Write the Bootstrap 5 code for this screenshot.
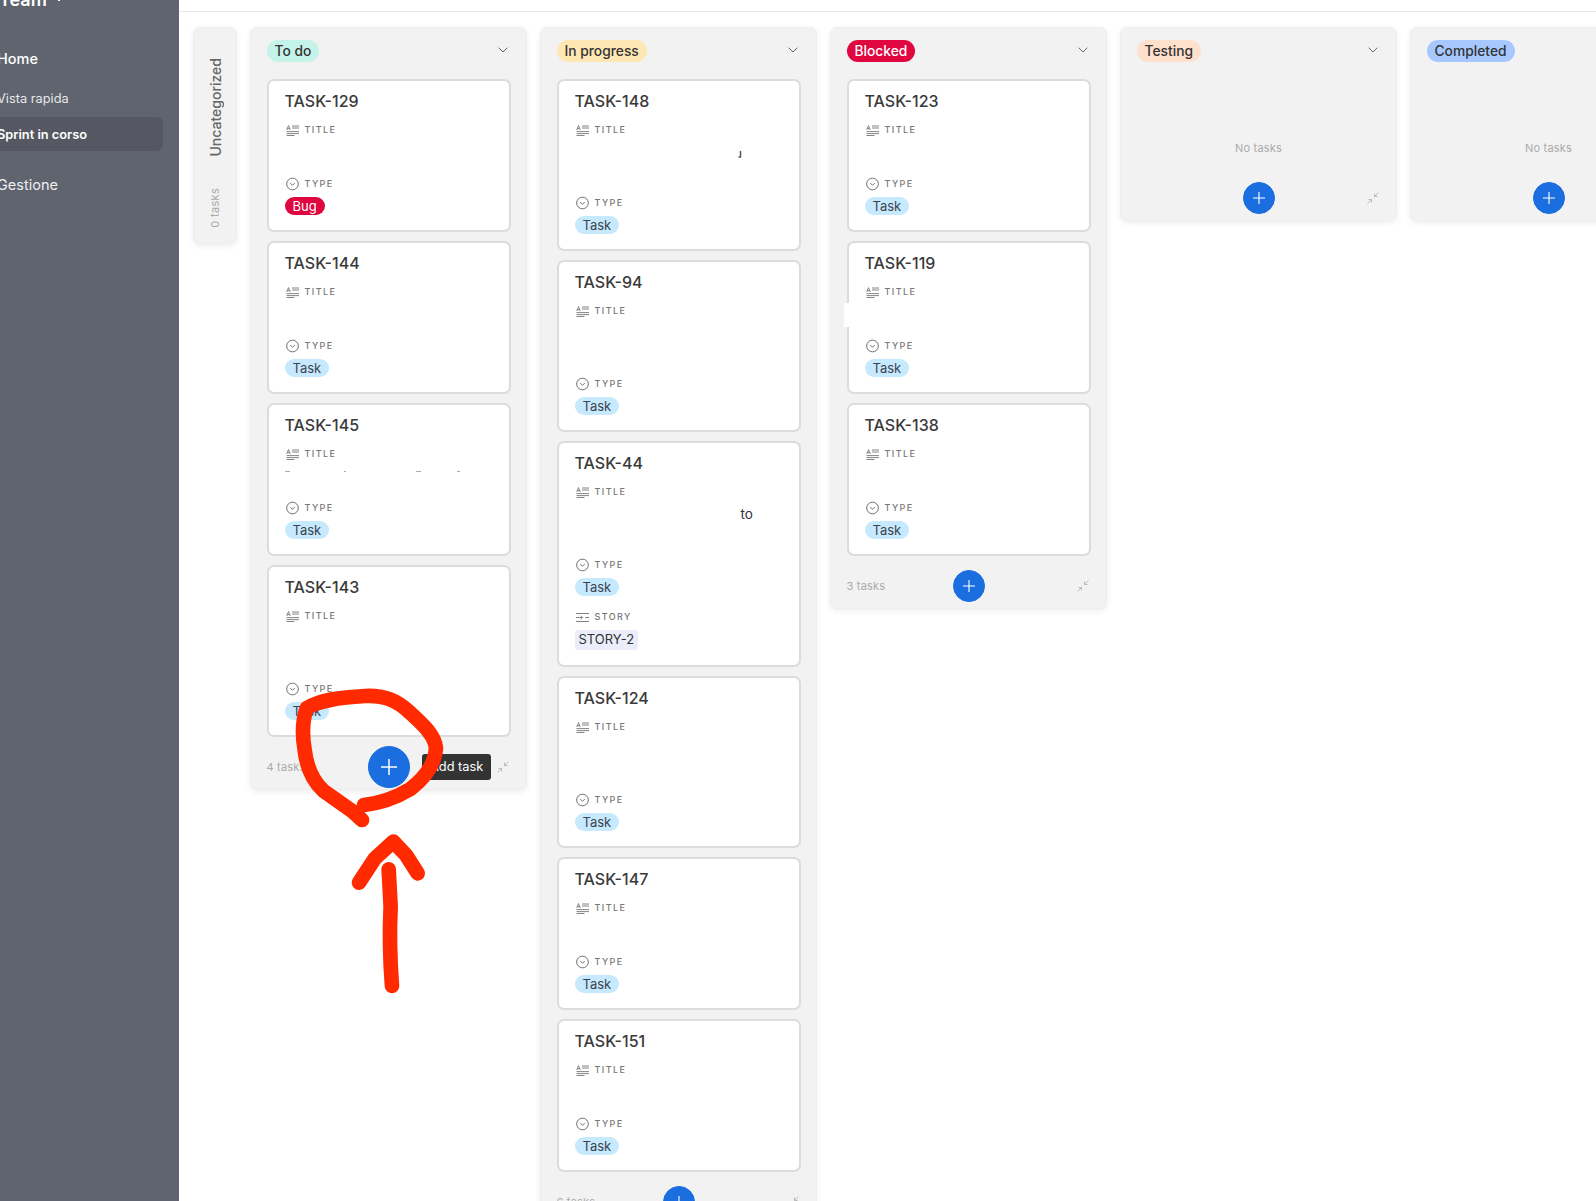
<!DOCTYPE html>
<html lang="it">
<head>
  <meta charset="UTF-8" />
  <meta name="viewport" content="width=device-width, initial-scale=1" />
  <title>Sprint in corso</title>
  <link href="https://cdn.jsdelivr.net/npm/bootstrap@5.3.3/dist/css/bootstrap.min.css" rel="stylesheet" />
  <style>
    html, body { height: 1201px; overflow: hidden; }
    body { font-family: Inter, "Liberation Sans", sans-serif; color: #333; background: #fff; }

    .side-panel { width: 179px; background: #5f646e; color: #fff; overflow: hidden; }
    .side-team { margin: -12px 0 0 -1px; height: 24px; line-height: 24px; font-size: 18px; font-weight: 600; white-space: nowrap; }
    .side-team svg { margin-left: 7px; vertical-align: 4px; }
    .side-head { margin-left: -3px; height: 22px; line-height: 22px; font-size: 14.5px; }
    .side-home { margin-top: 36px; font-weight: 500; }
    .side-manage { margin-top: 23px; color: #eceef1; }
    .side-row { margin-left: -20px; padding: 1px 0 0 17px; width: 183px; height: 34px; line-height: 33px; font-size: 12.8px; border-radius: 6px; }
    .side-quick { margin-top: 11px; color: #e6e8eb; }
    .side-active { margin-top: 2px; background: #555862; font-weight: 600; }

    .top-strip { height: 12px; border-bottom: 1px solid #e6e6e6; }
    .board { padding: 15px 0 0 14px; gap: 13px; overflow: hidden; }

    .lane { width: 277px; background: #f2f2f2; border: 1px solid #eeeeee; border-radius: 7px; box-shadow: 0 2px 6px rgba(0, 0, 0, .07); padding: 0 15.5px; }
    .lane-closed { width: 44px; height: 217px; padding: 30px 0 15px; }
    .lane-closed span { writing-mode: vertical-rl; transform: rotate(180deg); }
    .closed-name { font-size: 14px; color: #666; font-weight: 500; }
    .closed-count { font-size: 11px; color: #aaa; letter-spacing: .3px; }
    .lane-head { height: 51px; padding-top: 12px; }
    .lane-chip { height: 22px; line-height: 22px; padding: 0 8px; font-size: 13.8px; font-weight: 500; border-radius: 11px; color: #333; }
    .lane-arrow { margin: 7px 3px 0 0; }
    .chip-todo { background: #c4f3ea; }
    .chip-progress { background: #ffe7b3; }
    .chip-blocked { background: #e0063f; color: #fff; }
    .chip-testing { background: #ffe0cc; }
    .chip-done { background: #a6c8ff; }

    .task-card { --bs-card-border-color: #dcdcdc; --bs-card-border-width: 2px; --bs-card-border-radius: 7px; height: auto; margin-bottom: 9px; }
    .task-body { padding: 9px 15px 15px 16px; }
    .task-name { font-size: 16px; line-height: 22px; font-weight: 500; color: #3a3a3a; height: 32px; }
    .field-label { height: 16px; padding-left: 1px; font-size: 9px; letter-spacing: 1.4px; color: #777; font-weight: 500; gap: 6px; }
    .field-label svg { flex: none; }
    .field-value { height: 38px; font-size: 13.5px; line-height: 19px; padding-top: 5px; }
    .field-two { height: 57px; }
    .value-to { padding-left: 166px; }
    .type-chip { display: block; width: fit-content; height: 18px; line-height: 18px; padding: 0 8px; margin-top: 5px; font-size: 13px; border-radius: 9px; }
    .type-task { background: #c6e9fd; color: #3a4450; }
    .type-bug { background: #e0063f; color: #fff; }
    .story-label { margin-top: 13px; }
    .story-chip { display: block; width: fit-content; height: 20px; line-height: 19px; padding: 0 4px; margin-top: 5px; font-size: 13px; background: #ebeefa; border-radius: 3px; }
    .white-patch { position: absolute; left: -5px; top: 60px; width: 5px; height: 24px; background: #fff; }

    .lane-foot { height: 32px; margin: 14px 0 6px; display: grid; grid-template-columns: 1fr auto 1fr; align-items: center; position: relative; }
    .foot-count { font-size: 11px; color: #aaa; letter-spacing: .2px; }
    .add-btn { --bs-btn-bg: #1a6ee0; --bs-btn-border-color: #1a6ee0; width: 32px; height: 32px; }
    .add-big { width: 42px; height: 42px; margin: -5px; }
    .foot-shrink { justify-self: end; margin-right: 2px; }
    .add-tip { position: absolute; left: 155.5px; top: 3px; height: 26px; line-height: 26px; padding: 0 8px; width: 69px; white-space: nowrap; background: #333; color: #fff; font-size: 12.8px; border-radius: 3px; }
    .no-tasks { height: 89px; padding-bottom: 12px; font-size: 11px; color: #aaa; letter-spacing: .2px; }

    .scribble { position: absolute; left: 0; top: 0; pointer-events: none; }
  </style>
</head>
<body>
  <svg width="0" height="0" class="d-block position-absolute">
    <symbol id="ico-title" viewBox="0 0 13 11">
      <path d="M.7 5 2.500.6 4.300 5M1.300 3.600h2.400M6 1h7M6 3h7M.5 6.600h12.500M.5 8.600h12.500M.5 10.500h8" fill="none" stroke="#777" stroke-width=".9"/>
    </symbol>
    <symbol id="ico-type" viewBox="0 0 14 14">
      <circle cx="7" cy="7" r="6.300" fill="none" stroke="#666" stroke-width="1"/>
      <path d="M4.600 6 7 8.400 9.400 6" fill="none" stroke="#666" stroke-width="1"/>
    </symbol>
    <symbol id="ico-story" viewBox="0 0 14 11">
      <path d="M0 1.200h14M0 5.500h4M10 5.500h4M5 3.800 7 5.500 5 7.200M4 5.500h3M0 9.800h14" fill="none" stroke="#777" stroke-width="1"/>
    </symbol>
    <symbol id="ico-shrink" viewBox="0 0 12 12">
      <path d="M11.500.5 7.500 4.500M7.500 1.500v3h3M.5 11.500l4-4M1.500 7.500h3v3" fill="none" stroke="#bbb" stroke-width="1"/>
    </symbol>
    <symbol id="ico-plus" viewBox="0 0 14 14">
      <path d="M7 0v14M0 7h14" fill="none" stroke="#fff" stroke-width="1.300"/>
    </symbol>
  </svg>

  <div class="d-flex vh-100">
    <!-- Sidebar -->
    <div class="side-panel flex-shrink-0">
      <div class="side-team">Team<svg width="10" height="6" viewBox="0 0 10 6"><path d="M.7.7 5 5 9.300.7" fill="none" stroke="#fff"/></svg></div>
      <div class="side-head side-home">Home</div>
      <div class="side-row side-quick">Vista rapida</div>
      <div class="side-row side-active">Sprint in corso</div>
      <div class="side-head side-manage">Gestione</div>
    </div>

    <div class="flex-grow-1 overflow-hidden">
      <div class="top-strip"></div>
      <div id="board" class="board d-flex align-items-start">
        <div class="lane lane-closed d-flex flex-column align-items-center justify-content-between flex-shrink-0">
          <span class="closed-name">Uncategorized</span>
          <span class="closed-count">0 tasks</span>
        </div>
      </div>
    </div>
  </div>

  <!-- Red hand annotation from the screenshot -->
  <svg class="scribble" width="1596" height="1201" viewBox="0 0 1596 1201">
    <g transform="translate(240 560) scale(.3333)" fill="none" stroke="#ff2a00" stroke-width="44" stroke-linecap="round" stroke-linejoin="round">
      <path d="M366 780 335 752 250 692C215 660 200 620 194 570 187 530 188 480 200 445 240 420 300 412 375 408 430 405 470 420 510 458 545 490 585 525 588 565 585 610 560 650 510 688 470 712 420 730 372 735"/>
      <path d="M456 1278C450 1200 448 1120 452 1040L446 928"/>
      <path d="M357 968 405 895 460 845 498 885 533 940"/>
    </g>
  </svg>

  <script src="https://cdn.jsdelivr.net/npm/bootstrap@5.3.3/dist/js/bootstrap.bundle.min.js"></script>
  <script>
    const icon = (id, w, h) => `<svg width="${w}" height="${h}"><use href="#${id}"/></svg>`;

    const lanes = [
      { name: 'To do', chip: 'chip-todo', count: '4 tasks', big: true, tasks: [
        { id: 'TASK-129', bug: true },
        { id: 'TASK-144' },
        { id: 'TASK-145', marks: true },
        { id: 'TASK-143', two: true },
      ]},
      { name: 'In progress', chip: 'chip-progress', count: '6 tasks', tasks: [
        { id: 'TASK-148', two: true, dot: true },
        { id: 'TASK-94', two: true },
        { id: 'TASK-44', two: true, to: true, story: 'STORY-2' },
        { id: 'TASK-124', two: true },
        { id: 'TASK-147' },
        { id: 'TASK-151' },
      ]},
      { name: 'Blocked', chip: 'chip-blocked', count: '3 tasks', tasks: [
        { id: 'TASK-123' },
        { id: 'TASK-119', patch: true },
        { id: 'TASK-138' },
      ]},
      { name: 'Testing', chip: 'chip-testing', tasks: [] },
      { name: 'Completed', chip: 'chip-done', tasks: [] },
    ];

    function taskHtml(t) {
      let value = '';
      if (t.to) value = '<div class="value-to">to</div>';
      if (t.dot) value = '<svg class="d-block" width="208" height="30"><path d="M165.500 8v6M163.500 14h2.500" stroke="#555" stroke-width="1.500" fill="none"/></svg>';
      if (t.marks) value = '<svg class="d-block" width="208" height="24"><path d="M0 4.500h5M59 4.500h2M131 4.500h5M172 4.500h3" stroke="#aaa" fill="none"/></svg>';
      const story = t.story ? `
        <div class="field-label story-label d-flex align-items-center">${icon('ico-story', 13, 11)}STORY</div>
        <span class="story-chip">${t.story}</span>` : '';
      return `
      <div class="card task-card position-relative">
        ${t.patch ? '<div class="white-patch"></div>' : ''}
        <div class="task-body">
          <div class="task-name">${t.id}</div>
          <div class="field-label d-flex align-items-center">${icon('ico-title', 13, 11)}TITLE</div>
          <div class="field-value ${t.two ? 'field-two' : ''}">${value}</div>
          <div class="field-label d-flex align-items-center">${icon('ico-type', 13, 14)}TYPE</div>
          <span class="type-chip ${t.bug ? 'type-bug' : 'type-task'}">${t.bug ? 'Bug' : 'Task'}</span>${story}
        </div>
      </div>`;
    }

    const board = document.getElementById('board');
    lanes.forEach(l => {
      const body = l.tasks.length
        ? `<div class="lane-cards">${l.tasks.map(taskHtml).join('')}</div>`
        : '<div class="no-tasks d-flex align-items-end justify-content-center">No tasks</div>';
      const plus = l.big ? icon('ico-plus', 16, 16) : icon('ico-plus', 12, 12);
      board.insertAdjacentHTML('beforeend', `
      <div class="lane flex-shrink-0">
        <div class="lane-head d-flex justify-content-between align-items-start">
          <span class="lane-chip">${l.name}</span>
          <svg class="lane-arrow" width="10" height="6" viewBox="0 0 10 6"><path d="M.7.7 5 5 9.300.7" fill="none" stroke="#666"/></svg>
        </div>
        ${body}
        <div class="lane-foot">
          <span class="foot-count">${l.count || ''}</span>
          <button class="btn btn-primary add-btn rounded-circle p-0 d-flex align-items-center justify-content-center ${l.big ? 'add-big' : ''}">${plus}</button>
          <span class="foot-shrink d-flex">${icon('ico-shrink', 12, 12)}</span>
          ${l.big ? '<span class="add-tip">Add task</span>' : ''}
        </div>
      </div>`);
      board.lastElementChild.querySelector('.lane-chip').classList.add(l.chip);
    });
  </script>
</body>
</html>
